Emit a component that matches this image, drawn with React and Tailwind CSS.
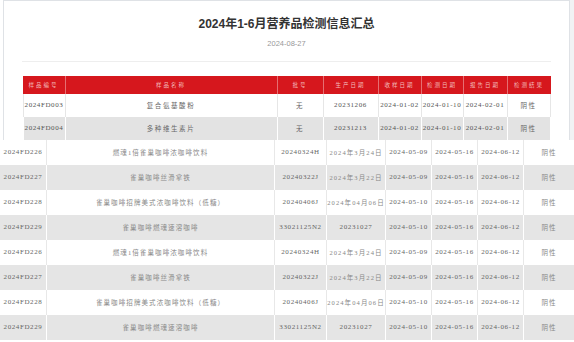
import React from "react";

const t1 = [
  ["2024FD003", "复合氨基酸粉", "无", "20231206", "2024-01-02", "2024-01-10", "2024-02-01", "阴性"],
  ["2024FD004", "多种维生素片", "无", "20231213", "2024-01-02", "2024-01-10", "2024-02-01", "阴性"],
];
const heads = ["样品编号", "样品名称", "批号", "生产日期", "收样日期", "检测日期", "报告日期", "检测结果"];
const base2 = [
  ["2024FD226", "燃魂1倍雀巢咖啡浓咖啡饮料", "20240324H", "2024年3月24日", "2024-05-09", "2024-05-16", "2024-06-12", "阴性"],
  ["2024FD227", "雀巢咖啡丝滑拿铁", "20240322J", "2024年3月22日", "2024-05-09", "2024-05-16", "2024-06-12", "阴性"],
  ["2024FD228", "雀巢咖啡招牌美式浓咖啡饮料（低糖）", "20240406J", "2024年04月06日", "2024-05-10", "2024-05-16", "2024-06-12", "阴性"],
  ["2024FD229", "雀巢咖啡燃魂速溶咖啡", "33021125N2", "20231027", "2024-05-10", "2024-05-16", "2024-06-12", "阴性"],
];
const t2 = [...base2, ...base2];
const isCjk = (s) => /[\u4e00-\u9fff]/.test(s);

export default function App() {
  return (
    <div className="w-[574px] h-[342px] overflow-hidden bg-white font-['Liberation_Serif','Noto_Sans_CJK_SC',serif]">
      <div className="flex h-[140px]">
        <div className="w-[3px] bg-white" />
        <div className="w-[567px] h-[140px] border border-b-0 border-[#dfe2e6] bg-white flex flex-col">
          <div className="mt-[15px] text-center text-[12px] leading-[16px] font-bold text-[#333] font-['Liberation_Sans','Noto_Sans_CJK_SC',sans-serif]">
            2024年1-6月营养品检测信息汇总
          </div>
          <div className="mt-[7px] text-center text-[7.5px] leading-[10px] text-[#999] font-['Liberation_Sans',sans-serif]">
            2024-08-27
          </div>
          <div className="mt-[12px] mx-[18px] border-t border-[#eeeeee]" />
          <div className="mt-[14px] mx-auto w-[528px]">
            <div className="grid grid-cols-[43px_212px_46px_55px_43px_42px_44px_43px] h-[18px] bg-[#d6171d]">
              {heads.map((h, i) => (
                <div
                  key={i}
                  className={`flex items-center justify-center text-[5.5px] tracking-[2px] text-[#f3bcbc] ${i < 7 ? "border-r border-[#e56f72]" : ""}`}
                >
                  {h}
                </div>
              ))}
            </div>
            {t1.map((r, ri) => (
              <div
                key={ri}
                className={`grid grid-cols-[43px_212px_46px_55px_43px_42px_44px_43px] h-[23px] ${ri % 2 ? "bg-[#e3e3e3]" : "bg-white"}`}
              >
                {r.map((c, i) => (
                  <div
                    key={i}
                    className={`flex items-center justify-center whitespace-nowrap ${isCjk(c) ? "text-[6.5px] tracking-[1.6px] text-[#666]" : "text-[7px] tracking-[0.6px] text-[#555]"} ${ri % 2 ? "border-white" : "border-[#e6e6e6]"} ${i === 0 ? "border-l" : ""} border-r`}
                  >
                    {c}
                  </div>
                ))}
              </div>
            ))}
          </div>
        </div>
        <div className="flex-1 bg-[#f1f2f4]" />
      </div>
      <div className="w-[574px]">
        {t2.map((r, ri) => (
          <div
            key={ri}
            className={`grid grid-cols-[47px_228px_52px_59px_46px_46px_46px_50px] h-[25px] ${ri % 2 ? "bg-[#e5e5e5]" : "bg-white"}`}
          >
            {r.map((c, i) => (
              <div
                key={i}
                className={`flex items-center justify-center whitespace-nowrap ${isCjk(c) ? "text-[6.5px] tracking-[1.1px] text-[#888]" : "text-[7px] tracking-[0.6px] text-[#666]"} ${ri % 2 ? "border-white" : "border-[#e8e8e8]"} ${i < 7 ? "border-r" : ""}`}
              >
                {c}
              </div>
            ))}
          </div>
        ))}
      </div>
    </div>
  );
}
